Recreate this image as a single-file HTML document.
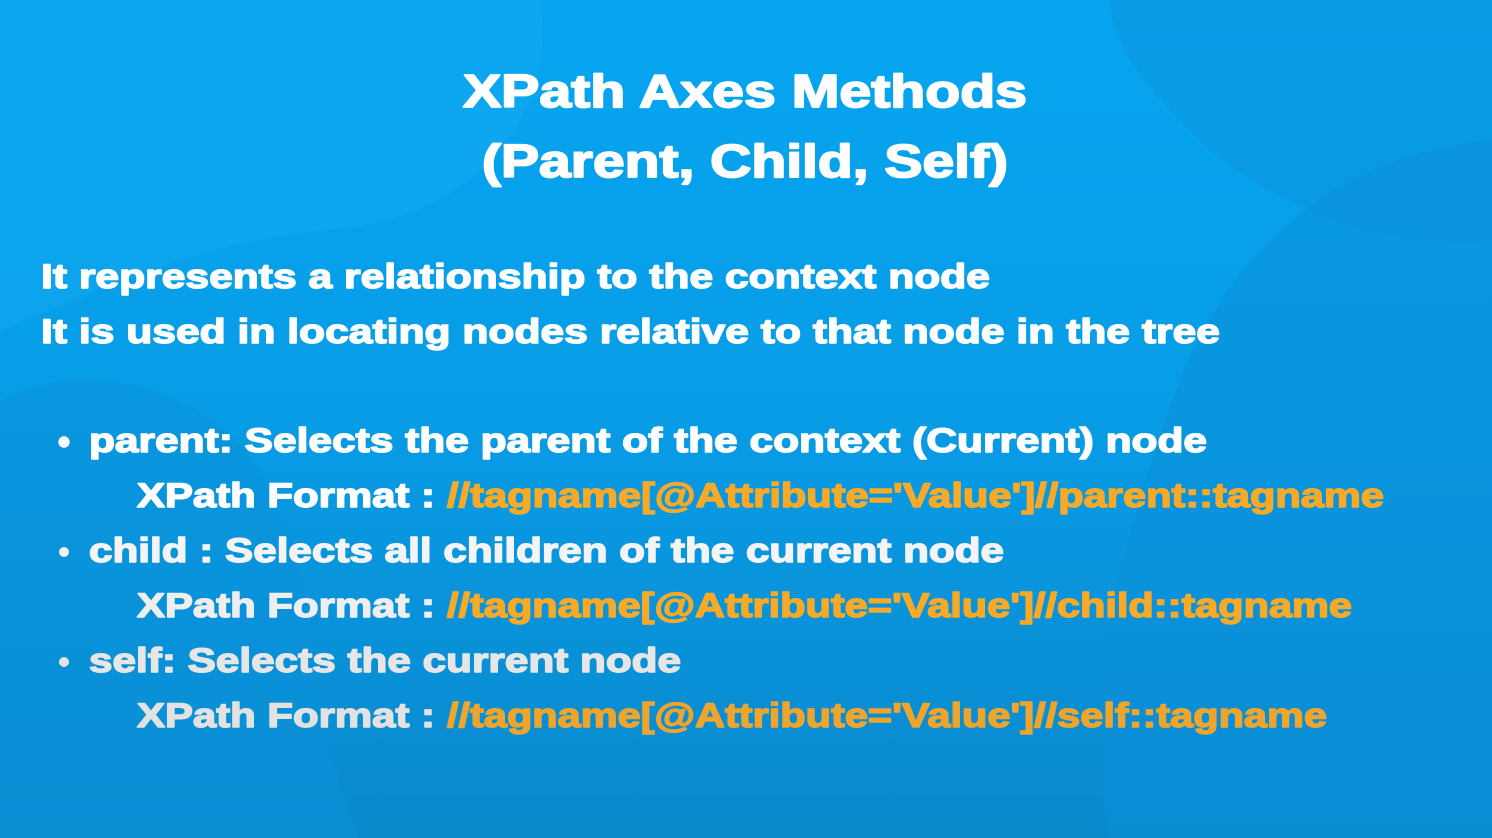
<!DOCTYPE html>
<html><head><meta charset="utf-8"><style>
html,body{margin:0;padding:0;width:1492px;height:838px;overflow:hidden}
svg{display:block}
text{font-family:"Liberation Sans",sans-serif;font-weight:bold}
</style></head><body>
<svg width="1492" height="838" viewBox="0 0 1492 838" xmlns="http://www.w3.org/2000/svg">
<defs>
<linearGradient id="bg" x1="0" y1="0" x2="0" y2="1">
<stop offset="0" stop-color="#05a5f0"/>
<stop offset="0.5" stop-color="#089ce6"/>
<stop offset="1" stop-color="#0a88cc"/>
</linearGradient>
</defs>
<rect width="1492" height="838" fill="url(#bg)"/>
<path d="M0 0 H540 C560 120 470 220 330 230 C200 240 80 300 0 330 Z" fill="#14aaf2" opacity="0.5"/>
<path d="M1110 0 H1492 V240 C1380 250 1250 200 1180 120 C1130 70 1110 30 1110 0 Z" fill="#0c96de" opacity="0.6"/>
<path d="M1492 140 C1360 150 1240 230 1180 380 C1120 540 1080 700 1110 838 H1492 Z" fill="#0b8fd8" opacity="0.55"/>
<path d="M0 400 C80 360 200 380 260 470 C320 560 300 700 360 838 H0 Z" fill="#0a92da" opacity="0.5"/>
<g fill="#ffffff" stroke="#ffffff" stroke-width="1.4" stroke-linejoin="round">
<text x="463" y="107" font-size="46" stroke-width="1.8" textLength="564" lengthAdjust="spacingAndGlyphs">XPath Axes Methods</text>
<text x="482" y="177" font-size="46" stroke-width="1.8" textLength="526" lengthAdjust="spacingAndGlyphs">(Parent, Child, Self)</text>
<text x="41" y="288" font-size="34" textLength="949" lengthAdjust="spacingAndGlyphs">It represents a relationship to the context node</text>
<text x="41" y="343" font-size="34" textLength="1179" lengthAdjust="spacingAndGlyphs">It is used in locating nodes relative to that node in the tree</text>
<circle cx="64" cy="442" r="5"/>
<text x="89" y="452" font-size="34" textLength="1118" lengthAdjust="spacingAndGlyphs">parent: Selects the parent of the context (Current) node</text>
<text x="137" y="507" font-size="34" textLength="298" lengthAdjust="spacingAndGlyphs">XPath Format :</text>
<circle cx="64" cy="552" r="5" fill="#f2f2f2" stroke="none"/>
<text x="89" y="562" font-size="34" fill="#f4f4f4" stroke="#f4f4f4" textLength="915" lengthAdjust="spacingAndGlyphs">child : Selects all children of the current node</text>
<text x="137" y="617" font-size="34" fill="#eeeeee" stroke="#eeeeee" textLength="298" lengthAdjust="spacingAndGlyphs">XPath Format :</text>
<circle cx="64" cy="662" r="5" fill="#e4e4e4" stroke="none"/>
<text x="89" y="672" font-size="34" fill="#e6e6e6" stroke="#e6e6e6" textLength="592" lengthAdjust="spacingAndGlyphs">self: Selects the current node</text>
<text x="137" y="727" font-size="34" fill="#e2e2e2" stroke="#e2e2e2" textLength="298" lengthAdjust="spacingAndGlyphs">XPath Format :</text>
</g>
<g fill="#f7a928" stroke="#f7a928" stroke-width="1.4" stroke-linejoin="round">
<text x="447" y="507" font-size="34" textLength="937" lengthAdjust="spacingAndGlyphs">//tagname[@Attribute='Value']//parent::tagname</text>
<text x="447" y="617" font-size="34" textLength="905" lengthAdjust="spacingAndGlyphs">//tagname[@Attribute='Value']//child::tagname</text>
<text x="447" y="727" font-size="34" fill="#eda52e" stroke="#eda52e" textLength="880" lengthAdjust="spacingAndGlyphs">//tagname[@Attribute='Value']//self::tagname</text>
</g>
</svg>
</body></html>
